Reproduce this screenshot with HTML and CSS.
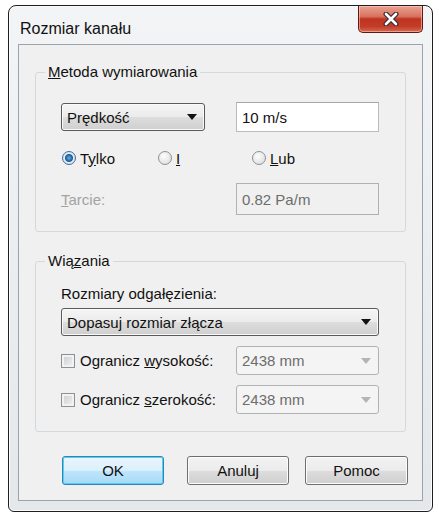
FILE: index.html
```html
<!DOCTYPE html>
<html>
<head>
    <link rel="stylesheet" href="styles.css">
</head>
<body>
    <div class="window">
        <div class="titlebar">
            <span class="title">Rozmiar kanału</span>
            <div class="close">
                <svg width="16" height="14" viewBox="0 0 16 14">
                    <path d="M3 2 L13 12 M13 2 L3 12" stroke="#3b2b3c" stroke-width="5" stroke-linecap="round"/>
                    <path d="M3 2 L13 12 M13 2 L3 12" stroke="#fff" stroke-width="2.6" stroke-linecap="round"/>
                </svg>
            </div>
        </div>

        <div class="client">
            <!-- Metoda wymiarowania -->
            <fieldset class="group">
                <legend><u>M</u>etoda wymiarowania</legend>
                <div class="row">
                    <div class="combo combo-short"><span>Prędkość</span><span class="arrow"></span></div>
                    <input class="field" type="text" value="10 m/s">
                </div>
                <div class="radios">
                    <label class="radio radio-first"><span class="dot checked"></span><span>T<u>y</u>lko</span></label>
                    <label class="radio radio-second"><span class="dot"></span><span><u>I</u></span></label>
                    <label class="radio"><span class="dot"></span><span><u>L</u>ub</span></label>
                </div>
                <div class="row row-last">
                    <span class="label disabled"><u>T</u>arcie:</span>
                    <input class="field field-disabled" type="text" value="0.82 Pa/m" disabled>
                </div>
            </fieldset>

            <!-- Wiązania -->
            <fieldset class="group group-second">
                <legend>Wią<u>z</u>ania</legend>
                <div class="label caption">Rozmiary odgałęzienia:</div>
                <div class="combo combo-wide"><span>Dopasuj rozmiar złącza</span><span class="arrow"></span></div>
                <div class="row check-row">
                    <label class="check"><span class="box"></span><span>Ogranicz <u>w</u>ysokość:</span></label>
                    <div class="combo combo-disabled"><span>2438 mm</span><span class="arrow"></span></div>
                </div>
                <div class="row check-row">
                    <label class="check"><span class="box"></span><span>Ogranicz <u>s</u>zerokość:</span></label>
                    <div class="combo combo-disabled"><span>2438 mm</span><span class="arrow"></span></div>
                </div>
            </fieldset>

            <div class="buttons">
                <button class="btn btn-default">OK</button>
                <button class="btn">Anuluj</button>
                <button class="btn btn-wide">Pomoc</button>
            </div>
        </div>
    </div>
</body>
</html>
```

FILE: styles.css
```css
body {
  margin: 0;
  background-color: #fff;
  font-family: "Liberation Sans", Arial, sans-serif;
  font-size: 15px;
  color: #111;
}

.window {
  box-sizing: border-box;
  width: 425px;
  margin: 5px 0 0 8px;
  padding: 0 9px 10px;
  border: 1px solid #1e1e1e;
  border-radius: 8px 8px 6px 6px;
  background: linear-gradient(#f2f4f6, #e4e8eb);
  box-shadow: inset 0 0 0 1px #fbfcfd;
}

.titlebar {
  height: 38px;
  display: flex;
  justify-content: space-between;
  align-items: flex-start;
}

.title {
  margin: 14px 0 0 2px;
  font-size: 16px;
  color: #111;
}

.close {
  width: 65px;
  height: 27px;
  box-sizing: border-box;
  border: 1px solid #5e1a10;
  border-top: none;
  border-radius: 0 0 5px 5px;
  background: linear-gradient(#e9a393 0%, #d9725d 40%, #bd3522 50%, #c43b26 78%, #d8684f 100%);
  box-shadow: inset 0 0 0 1px rgba(255, 220, 210, 0.5);
  display: flex;
  align-items: center;
  justify-content: center;
}

.client {
  border: 1px solid #9ba4ac;
  background-color: #f0f0f0;
  padding: 18px 0 15px 16px;
}

.group {
  box-sizing: border-box;
  width: 371px;
  margin: 0;
  padding: 21px 26px 17px 25px;
  border: 1px solid #d3dadf;
  border-radius: 3px;
}

.group legend {
  line-height: 18px;
  padding: 0 3px;
  margin-left: -16px;
}

.group-second {
  margin-top: 20px;
  padding-top: 15px;
}

.row {
  display: flex;
  justify-content: space-between;
  align-items: center;
  height: 30px;
}

.row-last {
  margin-top: 16px;
}

.label.disabled {
  color: #a3a3a3;
}

.caption {
  line-height: 18px;
}

/* rozwijane listy */
.combo {
  box-sizing: border-box;
  height: 28px;
  display: flex;
  align-items: center;
  justify-content: space-between;
  padding: 0 7px 0 5px;
  border: 1px solid #5a5a5a;
  border-radius: 3px;
  background: linear-gradient(#f5f5f5 0%, #ebebeb 50%, #dddddd 51%, #cfcfcf 100%);
  box-shadow: inset 0 0 0 1px #fafafa;
}

.combo-short {
  width: 144px;
}

.combo-wide {
  width: 318px;
  margin-top: 5px;
}

.combo-disabled {
  width: 143px;
  height: 29px;
  border-color: #b0b3b6;
  background: #f4f4f4;
  box-shadow: none;
  color: #6d6d6d;
}

.arrow {
  width: 0;
  height: 0;
  border-left: 5px solid transparent;
  border-right: 5px solid transparent;
  border-top: 6px solid #111;
}

.combo-disabled .arrow {
  border-top-color: #b4b4b4;
}

.field {
  box-sizing: border-box;
  width: 143px;
  height: 30px;
  padding: 0 5px;
  margin: 0;
  border: 1px solid #b8bcc2;
  border-top-color: #a3a8ae;
  background-color: #fff;
  font-family: inherit;
  font-size: 15px;
  color: #111;
}

.field-disabled {
  height: 32px;
  background-color: #f0f0f0;
  border-color: #aeb2b5;
  color: #6d6d6d;
}

/* przełączniki */
.radios {
  display: flex;
  align-items: center;
  height: 20px;
  margin-top: 16px;
}

.radio {
  display: flex;
  align-items: center;
  gap: 4px;
}

.radio-first {
  width: 96px;
  margin-left: 1px;
}

.radio-second {
  width: 94px;
}

.dot {
  width: 14px;
  height: 14px;
  box-sizing: border-box;
  border: 1px solid #8e9194;
  border-radius: 50%;
  background: radial-gradient(circle at 40% 35%, #fdfdfd, #d6d8da);
}

.dot.checked {
  border-color: #3b6ea0;
  background: radial-gradient(circle, #5db4ea 0, #1b5a95 3.5px, #e6eef5 4.5px, #d3d9df 7px);
}

.check-row {
  margin-top: 10px;
  height: 29px;
}

.check {
  display: flex;
  align-items: center;
  gap: 5px;
}

.box {
  width: 14px;
  height: 14px;
  box-sizing: border-box;
  border: 1px solid #8e9194;
  background: linear-gradient(135deg, #c9ccd0, #f3f3f3);
  box-shadow: inset 0 0 0 2px #f2f2f2;
}

/* przyciski */
.buttons {
  display: flex;
  gap: 16px;
  margin: 24px 0 0 27px;
}

.btn {
  box-sizing: border-box;
  width: 102px;
  height: 29px;
  border: 1px solid #6f6f6f;
  border-radius: 3px;
  background: linear-gradient(#f3f3f3 0%, #ebebeb 50%, #dddddd 51%, #cfcfcf 100%);
  box-shadow: inset 0 0 0 1px #fcfcfc;
  font-family: inherit;
  font-size: 15px;
  color: #111;
}

.btn-default {
  margin-right: 7px;
  border-color: #3c7fb1;
  background: linear-gradient(#eaf6fd 0%, #d9f0fc 50%, #bee6fd 51%, #a7d9f5 100%);
  box-shadow: inset 0 0 0 1px #48d4f8;
}

.btn-wide {
  width: 103px;
}
```
